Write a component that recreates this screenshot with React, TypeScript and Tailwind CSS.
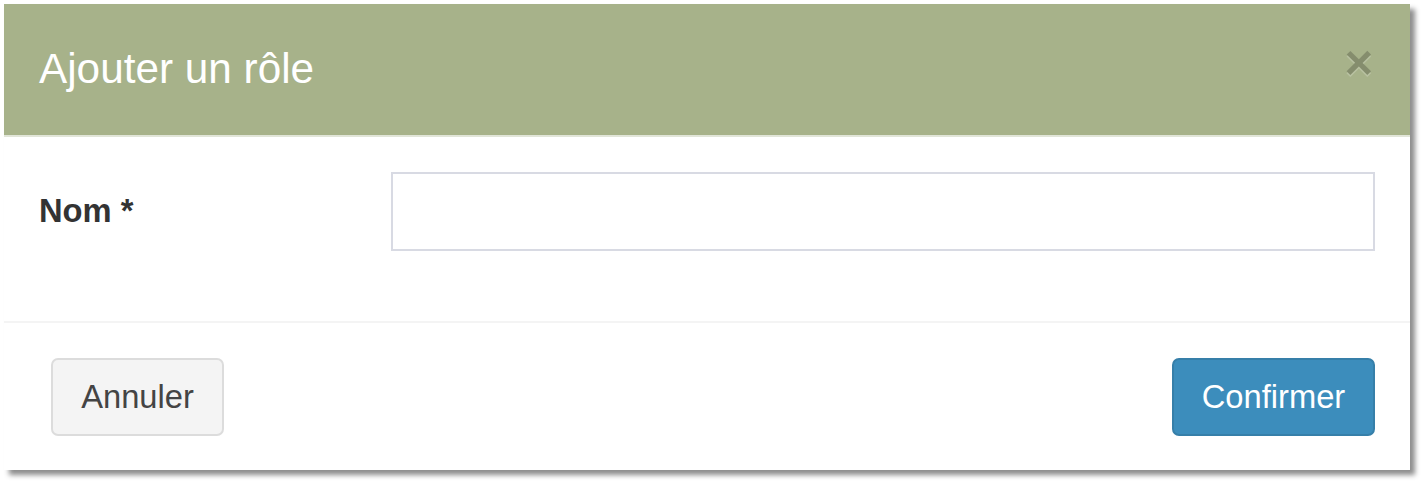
import React from "react";

export default function App() {
  return (
    <div className="min-h-screen bg-white p-[4px] font-['Liberation_Sans',Arial,sans-serif]">
      <div className="w-[1406px] bg-white shadow-[5px_5px_5px_rgba(0,0,0,0.45)]">
        <div className="flex items-start justify-between border-b-2 border-[#e1e5d8] bg-[#a7b28a] px-[35px] pt-[35px] pb-[36px]">
          <h4 className="m-0 text-[42.3px] leading-[60px] font-normal text-white">
            Ajouter un rôle
          </h4>
          <button
            type="button"
            className="-mt-[1px] mr-[2px] text-[49px] leading-none font-bold text-black opacity-20 [text-shadow:0_2px_0_#fff]"
          >
            ×
          </button>
        </div>

        <div className="px-[35px] pt-[35px] pb-[35px]">
          <div className="mb-[35px] flex">
            <label className="w-[352px] shrink-0 pt-[16px] text-[32.7px] leading-[46px] font-bold text-[#333]">
              Nom *
            </label>
            <input
              type="text"
              className="h-[79px] flex-1 border-2 border-[#d8dae3] bg-white px-[28px] text-[32.7px] outline-none"
            />
          </div>
        </div>

        <div className="flex items-center justify-between border-t-2 border-[#f4f4f4] px-[35px] pt-[35px] pb-[34px]">
          <button
            type="button"
            className="ml-[12px] h-[78px] w-[173px] rounded-[7px] border-2 border-[#dcdcdc] bg-[#f4f4f4] text-[32.7px] text-[#444]"
          >
            Annuler
          </button>
          <button
            type="button"
            className="h-[78px] w-[203px] rounded-[7px] border-2 border-[#367fa9] bg-[#3c8dbc] text-[32.7px] text-white"
          >
            Confirmer
          </button>
        </div>
      </div>
    </div>
  );
}
